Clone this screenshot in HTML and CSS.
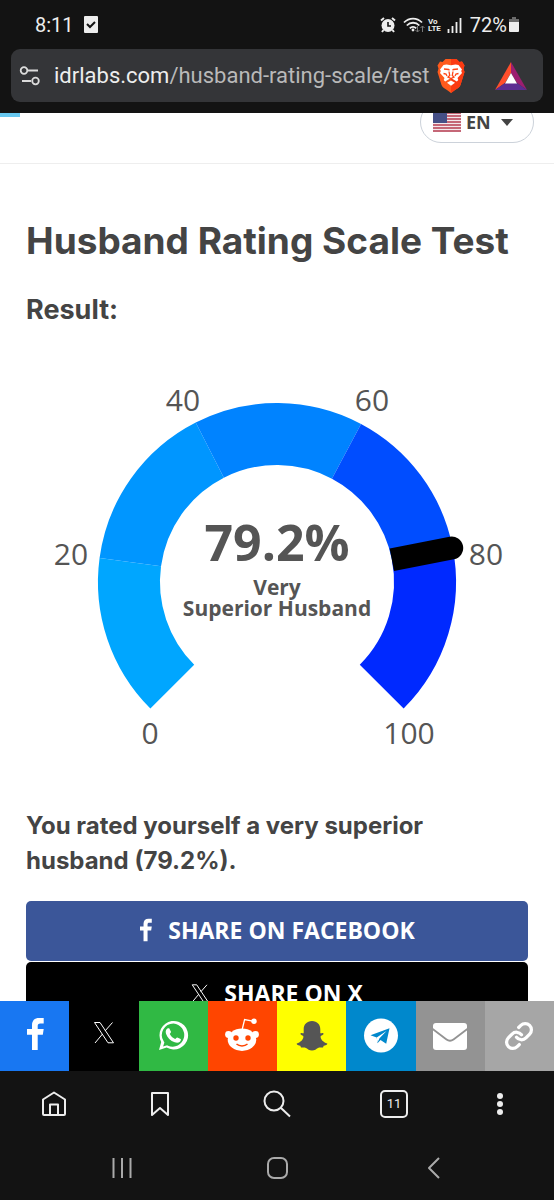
FILE: index.html
```html
<!DOCTYPE html>
<html lang="en">
	<head>
		<meta charset="UTF-8">
		<meta name="viewport" content="width=device-width, initial-scale=1">
		<title>Husband Rating Scale Test</title>
		<link rel="stylesheet" href="styles.css">
	</head>
	<body>
		<header class="browser">
			<div class="status">
				<span class="time">8:11</span>
				<svg class="check" width="14" height="17" viewBox="0 0 14 17"><rect width="14" height="17" rx="1" fill="#ededed"/><path d="M3 8l3 3 5-5" fill="none" stroke="#131313" stroke-width="2"/></svg>
				<div class="status-right">
					<svg width="16" height="16" viewBox="0 0 16 16"><circle cx="8" cy="8.500" r="6.500" fill="#ededed"/><path d="M1 3.500l3-2.500M15 3.500L12 1M3.500 13l-1.500 2M12.500 13l1.500 2" stroke="#ededed" stroke-width="2"/><path d="M8 5v4h3" fill="none" stroke="#131313" stroke-width="1.600"/></svg>
					<svg class="wifi" width="22" height="16" viewBox="0 0 22 16"><g fill="none" stroke="#ededed" stroke-width="1.800"><path d="M1 5.500c5-5.300 13-5.300 18 0M3.800 8.500c3.500-3.700 9-3.700 12.500 0M6.800 11.300c1.900-2 4.500-2 6.400 0"/></g><circle cx="10" cy="13" r="1.400" fill="#ededed"/><path d="M14.500 9v6m-2-2l2 2 2-2M19.500 15V9m-2 2l2-2 2 2" fill="none" stroke="#777"/></svg>
					<span class="lte">Vo<br>LTE</span>
					<svg class="signal" width="15" height="16" viewBox="0 0 15 16"><path d="M1.500 12v4M5.500 9v7M9.500 5v11M13.500 1v15" stroke="#ededed" stroke-width="1.800"/></svg>
					<span class="percent">72%</span>
					<svg width="12" height="17" viewBox="0 0 12 17"><path d="M4 1h4v2h3v4H1V3h3z" fill="#6b6b6b"/><path d="M1 6h10v9a1 1 0 0 1-1 1H2a1 1 0 0 1-1-1z" fill="#ededed"/></svg>
				</div>
			</div>
			<div class="address">
				<button class="icon-btn" aria-label="Site settings">
					<svg width="22" height="22" viewBox="0 0 22 22" fill="none" stroke="#dcdcdc" stroke-width="1.800"><circle cx="5" cy="5.500" r="3.300"/><path d="M9 5.500h10M3 16h9"/><circle cx="16.500" cy="16" r="3.300"/></svg>
				</button>
				<button class="url">idrlabs.com<span>/husband-rating-scale/test</span></button>
				<button class="icon-btn" aria-label="Brave Shields">
					<svg width="30" height="36" viewBox="0 0 30 36"><path d="M9.500 1h11l3 3 2.500-.500 2.500 4-1 3 1 3.500-4 13c-1 2.500-3.500 3.500-5.500 5L15 35l-4-3c-2-1.500-4.500-2.500-5.500-5l-4-13 1-3.500-1-3 2.500-4 2.500.500z" fill="#ff5a1c"/><path d="M15 1h5.500l3 3 2.500-.500 2.500 4-1 3 1 3.500-4 13c-1 2.500-3.500 3.500-5.500 5L15 35z" fill="#fb3a12"/><path d="M10.500 6.500l4.500.800 4.500-.800 3 .500 3.500 4.500-.800 1.500.800 2-4.500 5 .800 2-1.500 1.500-3.300-2L15 20l-2.500 1.500-3.300 2L7.700 22l.800-2-4.500-5 .800-2L4 11.500 7.500 7z" fill="#fff"/><path d="M15 22.500l4 2.300-4 3-4-3z" fill="#fff"/><path d="M8 11l4.500.500 1 .800M22 11l-4.500.500-1 .800M13 13.500l.700 4-1.700 1.500 3 1.500 3-1.500-1.700-1.500.700-4M7.500 15.500l2.500.500 1 2M22.500 15.500l-2.500.500-1 2" fill="none" stroke="#ff4516" stroke-width="1.300"/></svg>
				</button>
				<button class="icon-btn rewards" aria-label="Brave Rewards">
					<svg width="32" height="28" viewBox="0 0 32 28"><path d="M16 0v11l-6 10L0 28z" fill="#ff4e2b"/><path d="M16 0l16 28-10-7-6-10z" fill="#9c1e70"/><path d="M0 28l10-7h12l10 7z" fill="#5c2d91"/><path d="M16 11l6 10.500H10z" fill="#fff"/></svg>
				</button>
			</div>
		</header>

		<main class="page">
			<div class="progress"></div>
			<div class="site-header">
				<label class="lang">
					<svg width="28" height="20" viewBox="0 0 28 20"><rect width="28" height="20" fill="#f3e8ec"/><path d="M0 1h28M0 4h28M0 7h28M0 10h28M0 13h28M0 16h28M0 19h28" stroke="#b73c50" stroke-width="1.600"/><rect width="14" height="11" fill="#454f86"/></svg>
					<select aria-label="Language"><option>EN</option></select>
					<svg class="caret" width="12" height="7" viewBox="0 0 12 7"><path d="M0 0h12L6 7z" fill="#444"/></svg>
				</label>
			</div>

			<div class="content">
				<h1>Husband Rating Scale Test</h1>
				<h2>Result:</h2>

				<svg class="gauge" viewBox="0 0 502 400" role="img" aria-label="79.2% Very Superior Husband">
					<g transform="translate(251 212)">
						<g class="arcs">
							<path stroke="#00a6ff" d="M-104.700 104.700A148 148 0 0 1-146.700-19.800"/>
							<path stroke="#0096ff" d="M-146.700-19.800A148 148 0 0 1-67.200-131.900"/>
							<path stroke="#0083ff" d="M-67.200-131.900A148 148 0 0 1 69.500-130.700"/>
							<path stroke="#004dff" d="M69.500-130.700A148 148 0 0 1 145.200-28.700"/>
							<path stroke="#0029ff" d="M145.200-28.700A148 148 0 0 1 104.700 104.700"/>
						</g>
						<!-- needle -->
						<g transform="rotate(-11)">
							<path d="M117-11.500H178a11.500 11.500 0 0 1 0 23H117z"/>
						</g>
						<g class="ticks">
							<text x="-127" y="162">0</text>
							<text x="-206" y="-17">20</text>
							<text x="-94" y="-171">40</text>
							<text x="95" y="-171">60</text>
							<text x="209" y="-17">80</text>
							<text x="132" y="162">100</text>
						</g>
						<text class="score" y="-21">79.2%</text>
						<text class="rating" y="13">Very</text>
						<text class="rating" y="34">Superior Husband</text>
					</g>
				</svg>

				<p class="summary">You rated yourself a very superior husband (79.2%).</p>

				<a class="share facebook" href="#">
					<svg width="14" height="24" viewBox="11 1 19 34"><path d="M17 34V18.700H12V13h5V9.200C17 4.600 19.600 2 24 2h4.700v5.600h-3.400c-2 0-2.600.800-2.600 2.600V13h6l-.900 5.700h-5.100V34z" fill="#fff"/></svg>
					SHARE ON FACEBOOK
				</a>
				<a class="share x" href="#">
					<svg width="18" height="20" viewBox="9 5 22 23" fill="none" stroke="#fff" stroke-width="1.200"><path d="M10.500 6.500h5.500L29.500 26.800H24zM28.500 6.500L21 15M18.500 18L11 27"/></svg>
					SHARE ON X
				</a>
			</div>
		</main>

		<nav class="share-bar">
			<a class="bar-fb" href="#" aria-label="Facebook">
				<svg viewBox="0 0 40 40"><path d="M17 34V18.700H12V13h5V9.200C17 4.600 19.600 2 24 2h4.700v5.600h-3.400c-2 0-2.600.800-2.600 2.600V13h6l-.900 5.700h-5.100V34z" fill="#fff"/></svg>
			</a>
			<a class="bar-x" href="#" aria-label="X">
				<svg viewBox="0 0 40 40" fill="none" stroke="#fff"><path d="M10.500 6.500h5.500L29.500 26.800H24zM28.500 6.500L21 15M18.500 18L11 27"/></svg>
			</a>
			<a class="bar-wa" href="#" aria-label="WhatsApp">
				<svg viewBox="0 0 40 40"><path d="M6 34l2.200-8a14.300 14.300 0 1 1 5.400 5.600zM20.500 7.500a11.600 11.600 0 0 0-9.700 18l.600.900-1.300 4 4-1.200.9.500A11.600 11.600 0 1 0 20.500 7.500z" fill="#fff" fill-rule="evenodd"/><path d="M13.200 13.800c.6-1.300 1.900-2 3-1.500l1.800 3.400c.2.700-1 1.700-1.200 2.300 1 2.200 3 4 5.300 5 .7-.300 1.400-1.700 2.200-1.500l3.400 1.600c.5.400 0 2-.800 2.700-1.400 1.200-3.300 1.200-5.200.5-4.300-1.500-7.400-4.700-8.700-8.600-.4-1.500-.4-2.700.2-3.900z" fill="#fff"/></svg>
			</a>
			<a class="bar-rd" href="#" aria-label="Reddit">
				<svg viewBox="0 0 40 40"><g fill="#fff"><ellipse cx="20" cy="23.700" rx="14.300" ry="11.200"/><circle cx="6.500" cy="18.500" r="3.400"/><circle cx="33.500" cy="18.500" r="3.400"/><circle cx="32" cy="5.300" r="2.700"/></g><path d="M20.300 13l2.300-9.500 8 1.700" fill="none" stroke="#fff" stroke-width="1.300"/><g fill="#ff4500"><circle cx="14" cy="22" r="2.700"/><circle cx="26" cy="22" r="2.700"/></g><path d="M14.500 28c3 2.600 8 2.600 11 0" fill="none" stroke="#ff4500" stroke-width="1.500"/></svg>
			</a>
			<a class="bar-sc" href="#" aria-label="Snapchat">
				<svg viewBox="0 0 40 40"><path d="M20 5c5.200 0 8.300 3.600 8.300 8.300v3.900c1 .5 2-.6 3 .1.900.8-.4 1.900-2.600 2.800-.6 3 2.300 6.300 6.600 7.400.2 1.500-2 1.900-3.600 2.200l-.7 1.800c-1.500.2-3-.5-5 .4-1.800 1-3.200 2.600-6 2.600s-4.200-1.600-6-2.600c-2-.9-3.500-.2-5-.400l-.7-1.800c-1.600-.300-3.800-.700-3.600-2.200 4.300-1.100 7.200-4.400 6.600-7.400-2.200-.9-3.500-2-2.600-2.800 1-.7 2 .4 3-.1v-3.900C11.700 8.600 14.800 5 20 5z" fill="#555"/></svg>
			</a>
			<a class="bar-tg" href="#" aria-label="Telegram">
				<svg viewBox="0 0 40 40"><circle cx="20" cy="19.500" r="17" fill="#fff"/><path d="M9.500 19.200L28.500 12.200l-3.300 15.500-5.700-3.800-3 3.300-.8-5.700z" fill="#0088cc"/><path d="M15.700 21.500l9.800-6.500-7 7.200-2 4.500z" fill="#fff"/></svg>
			</a>
			<a class="bar-mail" href="#" aria-label="Email">
				<svg viewBox="0 0 40 40"><rect x="3" y="7" width="34" height="27" rx="3" fill="#fff"/><path d="M2 12.500l14.500 11c2.300 1.700 4.700 1.700 7 0L38 12.500" fill="none" stroke="#939393" stroke-width="1.800"/></svg>
			</a>
			<a class="bar-link" href="#" aria-label="Copy link">
				<svg viewBox="0 0 40 40" fill="none" stroke="#fff" stroke-width="2.600" stroke-linecap="round"><path transform="translate(5 5) scale(1.250)" d="M10 13a5 5 0 0 0 7.540.540l3-3a5 5 0 0 0-7.070-7.070l-1.720 1.710M14 11a5 5 0 0 0-7.540-.540l-3 3a5 5 0 0 0 7.070 7.070l1.710-1.710"/></svg>
			</a>
		</nav>

		<footer class="bottom">
			<nav class="toolbar">
				<button class="icon-btn" aria-label="Home"><svg width="28" height="28" viewBox="0 0 28 28"><path d="M3 9.500l11-7 11 7V24a1 1 0 0 1-1 1H4a1 1 0 0 1-1-1zM10 25V14.500h8V25"/></svg></button>
				<button class="icon-btn" aria-label="Bookmarks"><svg width="28" height="28" viewBox="0 0 28 28"><path d="M6 3h16v22l-8-7-8 7z"/></svg></button>
				<button class="icon-btn" aria-label="Search"><svg width="28" height="28" viewBox="0 0 28 28"><circle cx="11" cy="11" r="9.500"/><path d="M18 18l9 8.500"/></svg></button>
				<button class="tabs" aria-label="Tabs">11</button>
				<button class="icon-btn" aria-label="Menu"><svg width="28" height="28" viewBox="0 0 28 28"><g fill="#ededed" stroke="none"><circle cx="14" cy="6" r="3"/><circle cx="14" cy="14" r="3"/><circle cx="14" cy="22" r="3"/></g></svg></button>
			</nav>
			<nav class="system">
				<button class="icon-btn" aria-label="Recents"><svg width="24" height="24" viewBox="0 0 24 24"><path d="M3.500 2v20M12 2v20M20.500 2v20"/></svg></button>
				<button class="icon-btn" aria-label="Home screen"><svg width="24" height="24" viewBox="0 0 24 24"><rect x="3" y="2" width="19" height="20" rx="6"/></svg></button>
				<button class="icon-btn" aria-label="Back"><svg width="24" height="24" viewBox="0 0 24 24"><path d="M19 2L9 12l10 10"/></svg></button>
			</nav>
		</footer>
	</body>
</html>
```
FILE: styles.css
```css
* {
	margin: 0;
	padding: 0;
	box-sizing: border-box;
}

body {
	display: flex;
	flex-direction: column;
	height: 100vh;
	background: #fff;
	color: #444;
	font-family: "Open Sans", "Noto Sans", sans-serif;
}

svg {
	display: block;
	flex: none;
}

a {
	color: #fff;
	text-decoration: none;
}

button {
	border: none;
	background: none;
	color: #ededed;
	font-family: Roboto, sans-serif;
}

/* browser top */
.browser {
	padding: 0 11px 11px;
	background: #131313;
	color: #ededed;
	font-family: Roboto, sans-serif;
}

.status {
	display: flex;
	align-items: center;
	height: 49px;
	padding: 0 23px 0 24px;
	font-size: 20px;
}

.check {
	margin-left: 10px;
}

.status-right {
	display: flex;
	align-items: center;
	margin-left: auto;
}

.wifi {
	margin-left: 7px;
}

.lte {
	margin: 0 6px 0 3px;
	font-size: 8px;
	font-weight: bold;
	line-height: 7px;
}

.percent {
	margin: 0 1px 0 8px;
}

.address {
	display: flex;
	align-items: center;
	height: 53px;
	padding: 0 16px 0 8px;
	border-radius: 9px;
	background: #343538;
}

.url {
	flex: 1;
	min-width: 0;
	padding-left: 13px;
	overflow: hidden;
	white-space: nowrap;
	text-align: left;
	font-size: 22px;
}

.url span {
	color: #b9b9b9;
}

.rewards {
	margin-left: 29px;
}

/* page */
.page {
	position: relative;
	flex: 1;
	min-height: 0;
	overflow: hidden;
}

.progress {
	position: absolute;
	top: 0;
	left: 0;
	width: 20px;
	height: 4px;
	background: #68c8f0;
}

.site-header {
	display: flex;
	justify-content: flex-end;
	align-items: flex-end;
	height: 51px;
	padding: 0 20px 20px;
	border-bottom: 1px solid #eee;
}

.lang {
	display: flex;
	align-items: center;
	flex: none;
	height: 42px;
	padding: 0 20px 0 12px;
	border: 1px solid #ccd2da;
	border-radius: 21px;
}

.lang select {
	width: 35px;
	margin-left: 5px;
	border: none;
	background: none;
	appearance: none;
	color: #444;
	font: bold 18px "Open Sans", sans-serif;
}

.content {
	padding: 50px 26px 0;
}

h1,
h2,
.summary {
	font-family: Inter, sans-serif;
	font-weight: bold;
}

h1 {
	font-size: 37px;
	line-height: 54px;
	white-space: nowrap;
}

h2 {
	margin-top: 24px;
	font-size: 27px;
	line-height: 36px;
}

.gauge {
	width: 100%;
	margin-top: 42px;
	overflow: visible;
}

.gauge text {
	fill: #555;
	text-anchor: middle;
}

.arcs {
	fill: none;
	stroke-width: 62px;
}

.ticks {
	font-size: 30px;
}

.score {
	font-size: 50px;
	font-weight: bold;
}

.rating {
	font-size: 21px;
	font-weight: bold;
}

.summary {
	margin: 38px 0 23px;
	font-size: 24px;
	line-height: 35px;
}

.share {
	display: flex;
	justify-content: center;
	align-items: center;
	gap: 15px;
	height: 60px;
	padding-bottom: 2px;
	margin-bottom: 1px;
	border-radius: 5px;
	font-size: 23px;
	font-weight: bold;
}

.facebook {
	background: #3b5699;
}

.x {
	height: 64px;
	background: #000;
}

/* share strip */
.share-bar {
	display: grid;
	grid-template-columns: repeat(8, 1fr);
	height: 70px;
}

.share-bar a {
	display: flex;
	justify-content: center;
	align-items: center;
}

.share-bar svg {
	width: 40px;
	height: 40px;
}

.bar-fb { background: #1877f2; }
.bar-x { background: #000; }
.bar-wa { background: #30b944; }
.bar-rd { background: #ff4500; }
.bar-sc { background: #ffff00; }
.bar-tg { background: #0088cc; }
.bar-mail { background: #939393; }
.bar-link { background: #a6a6a6; }

/* browser bottom */
.bottom {
	background: #131313;
}

.bottom svg {
	fill: none;
	stroke: #ededed;
	stroke-width: 2px;
	stroke-linejoin: round;
}

.toolbar,
.system {
	display: grid;
	justify-items: center;
	align-items: center;
}

.toolbar {
	grid-template-columns: 108fr 104fr 130fr 104fr 108fr;
	height: 65px;
}

.tabs {
	width: 28px;
	height: 28px;
	border: 2px solid #ededed;
	border-radius: 5px;
	font-size: 13px;
}

.system {
	grid-template-columns: repeat(3, 1fr);
	height: 64px;
	padding: 0 44px;
}

.system svg {
	stroke: #aaa;
}
```
